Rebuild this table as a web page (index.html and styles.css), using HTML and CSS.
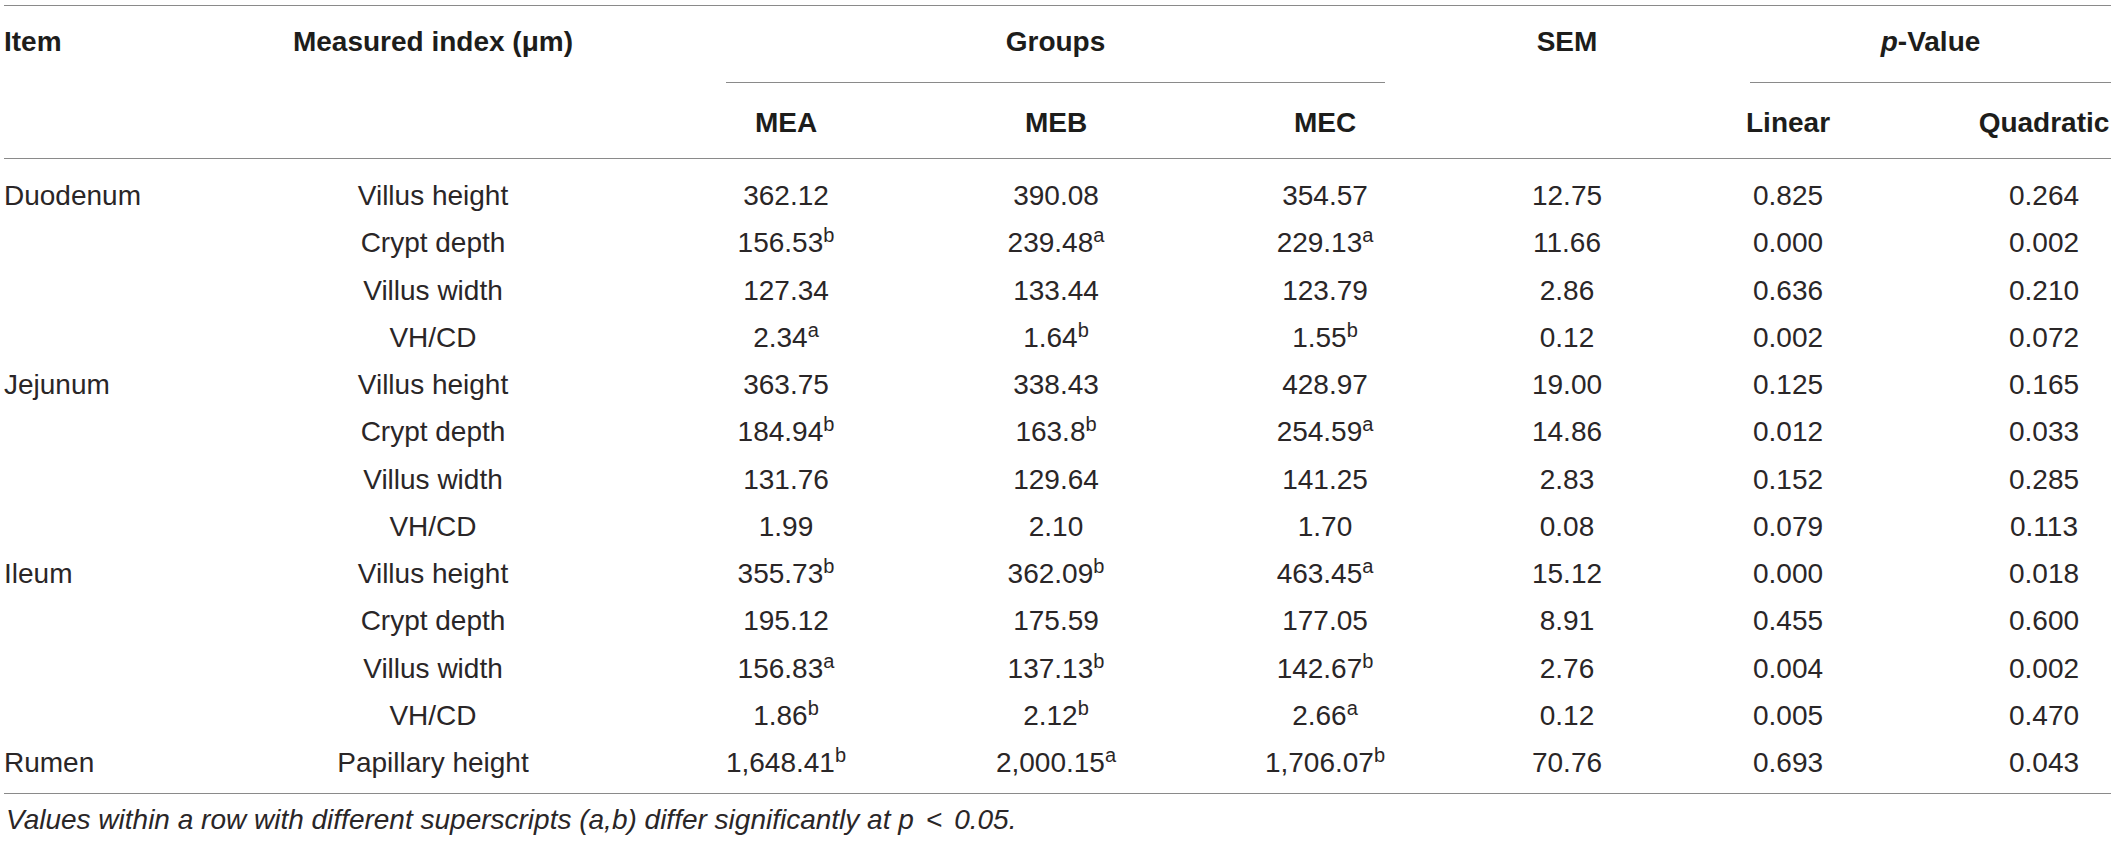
FILE: index.html
```html
<!DOCTYPE html>
<html lang="en">
<head>
    <meta charset="UTF-8">
    <title>Intestinal morphology</title>
    <link rel="stylesheet" href="styles.css">
</head>
<body>
    <div class="wrap">
        <table class="data">
            <colgroup>
                <col class="c-item">
                <col class="c-index">
                <col class="c-mea">
                <col class="c-meb">
                <col class="c-mec">
                <col class="c-sem">
                <col class="c-lin">
                <col class="c-quad">
            </colgroup>
            <thead>
                <tr class="h1">
                    <th rowspan="2" class="item">Item</th>
                    <th rowspan="2">Measured index (&mu;m)</th>
                    <th colspan="3" class="span"><div class="span-line groups">Groups</div></th>
                    <th rowspan="2">SEM</th>
                    <th colspan="2" class="span"><div class="span-line pval"><i>p</i>-Value</div></th>
                </tr>
                <tr class="h2">
                    <th>MEA</th>
                    <th>MEB</th>
                    <th>MEC</th>
                    <th class="lin">Linear</th>
                    <th>Quadratic</th>
                </tr>
            </thead>
            <tbody>
                <tr class="first">
                    <td class="item">Duodenum</td><td>Villus height</td>
                    <td>362.12</td><td>390.08</td><td>354.57</td>
                    <td>12.75</td><td class="lin">0.825</td><td>0.264</td>
                </tr>
                <tr>
                    <td class="item"></td><td>Crypt depth</td>
                    <td>156.53<sup>b</sup></td><td>239.48<sup>a</sup></td><td>229.13<sup>a</sup></td>
                    <td>11.66</td><td class="lin">0.000</td><td>0.002</td>
                </tr>
                <tr>
                    <td class="item"></td><td>Villus width</td>
                    <td>127.34</td><td>133.44</td><td>123.79</td>
                    <td>2.86</td><td class="lin">0.636</td><td>0.210</td>
                </tr>
                <tr>
                    <td class="item"></td><td>VH/CD</td>
                    <td>2.34<sup>a</sup></td><td>1.64<sup>b</sup></td><td>1.55<sup>b</sup></td>
                    <td>0.12</td><td class="lin">0.002</td><td>0.072</td>
                </tr>
                <tr>
                    <td class="item">Jejunum</td><td>Villus height</td>
                    <td>363.75</td><td>338.43</td><td>428.97</td>
                    <td>19.00</td><td class="lin">0.125</td><td>0.165</td>
                </tr>
                <tr>
                    <td class="item"></td><td>Crypt depth</td>
                    <td>184.94<sup>b</sup></td><td>163.8<sup>b</sup></td><td>254.59<sup>a</sup></td>
                    <td>14.86</td><td class="lin">0.012</td><td>0.033</td>
                </tr>
                <tr>
                    <td class="item"></td><td>Villus width</td>
                    <td>131.76</td><td>129.64</td><td>141.25</td>
                    <td>2.83</td><td class="lin">0.152</td><td>0.285</td>
                </tr>
                <tr>
                    <td class="item"></td><td>VH/CD</td>
                    <td>1.99</td><td>2.10</td><td>1.70</td>
                    <td>0.08</td><td class="lin">0.079</td><td>0.113</td>
                </tr>
                <tr>
                    <td class="item">Ileum</td><td>Villus height</td>
                    <td>355.73<sup>b</sup></td><td>362.09<sup>b</sup></td><td>463.45<sup>a</sup></td>
                    <td>15.12</td><td class="lin">0.000</td><td>0.018</td>
                </tr>
                <tr>
                    <td class="item"></td><td>Crypt depth</td>
                    <td>195.12</td><td>175.59</td><td>177.05</td>
                    <td>8.91</td><td class="lin">0.455</td><td>0.600</td>
                </tr>
                <tr>
                    <td class="item"></td><td>Villus width</td>
                    <td>156.83<sup>a</sup></td><td>137.13<sup>b</sup></td><td>142.67<sup>b</sup></td>
                    <td>2.76</td><td class="lin">0.004</td><td>0.002</td>
                </tr>
                <tr>
                    <td class="item"></td><td>VH/CD</td>
                    <td>1.86<sup>b</sup></td><td>2.12<sup>b</sup></td><td>2.66<sup>a</sup></td>
                    <td>0.12</td><td class="lin">0.005</td><td>0.470</td>
                </tr>
                <tr class="last">
                    <td class="item">Rumen</td><td>Papillary height</td>
                    <td>1,648.41<sup>b</sup></td><td>2,000.15<sup>a</sup></td><td>1,706.07<sup>b</sup></td>
                    <td>70.76</td><td class="lin">0.693</td><td>0.043</td>
                </tr>
            </tbody>
        </table>
        <p class="note">Values within a row with different superscripts (a,b) differ significantly at p<span class="op">&lt;</span>0.05.</p>
    </div>
</body>
</html>
```

FILE: styles.css
```css
body {
    margin: 0;
    background: #fff;
    color: #2a2627;
    font-family: "Liberation Sans", Arial, sans-serif;
}
.wrap {
    padding: 5px 0 0 4px;
}
.data {
    width: 2107px;
    table-layout: fixed;
    border-collapse: separate;
    border-spacing: 0;
    font-size: 28px;
}
.c-item { width: 251px; }
.c-index { width: 356px; }
.c-mea { width: 350px; }
.c-meb { width: 190px; }
.c-mec { width: 348px; }
.c-sem { width: 136px; }
.c-lin { width: 342px; }
.c-quad { width: 134px; }

th, td {
    padding: 0;
    text-align: center;
    white-space: nowrap;
}
th {
    font-weight: bold;
    line-height: 32px;
    color: #1d1d1b;
}
.item {
    text-align: left;
}
.lin {
    padding-right: 36px;
}

/* header rows */
.h1 th {
    border-top: 1px solid #8a8a8a;
    padding-top: 20px;
    vertical-align: top;
}
.h1 th[rowspan] {
    border-bottom: 1px solid #8a8a8a;
}
.h1 th.span {
    padding-bottom: 0;
}
.span-line {
    padding-bottom: 24px;
    border-bottom: 1px solid #8a8a8a;
}
.groups {
    margin: 0 114px 0 115px;
}
.pval {
    margin-left: 115px;
}
.h2 th {
    padding-top: 24px;
    padding-bottom: 19px;
    border-bottom: 1px solid #8a8a8a;
}

/* body rows */
td {
    line-height: 47.25px;
    font-weight: normal;
}
.first td {
    padding-top: 13px;
}
.last td {
    padding-bottom: 7px;
    border-bottom: 1px solid #8a8a8a;
}
sup {
    font-size: 20px;
    line-height: 0;
    vertical-align: 10px;
}

.note {
    margin: 10px 0 0 2px;
    font-size: 28px;
    line-height: 32px;
    font-style: italic;
}
.note .op {
    margin: 0 12px;
}
```
